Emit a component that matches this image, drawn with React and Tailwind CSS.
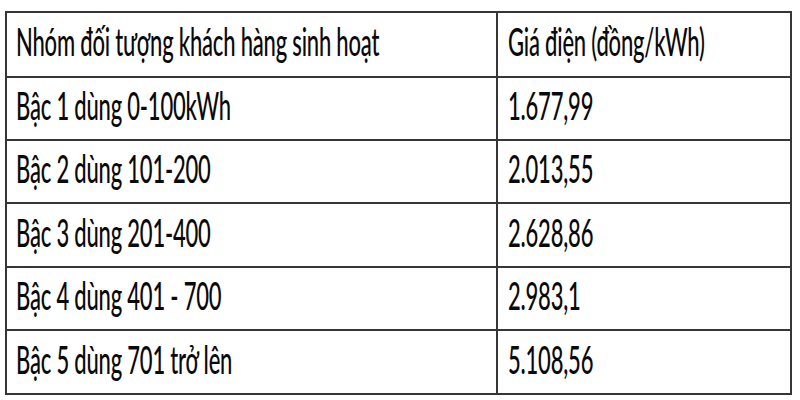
import React from "react";

const rows = [
  { label: "Bậc 1 dùng 0-100kWh", price: "1.677,99", h: "h-[63px]" },
  { label: "Bậc 2 dùng 101-200", price: "2.013,55", h: "h-[63px]" },
  { label: "Bậc 3 dùng 201-400", price: "2.628,86", h: "h-[64px]" },
  { label: "Bậc 4 dùng 401 - 700", price: "2.983,1", h: "h-[63px]" },
  { label: "Bậc 5 dùng 701 trở lên", price: "5.108,56", h: "h-[64px]" },
];

const Cell = ({ children, className = "" }) => (
  <div className={`flex items-center ${className}`}>
    <span className="inline-block scale-y-[1.75] origin-center text-[22px] leading-none font-medium text-[#0a0a0a] tracking-[-0.2px]">
      {children}
    </span>
  </div>
);

export default function App() {
  return (
    <div
      className="w-[800px] h-[400px] bg-white pt-[11px] pl-[5px]"
      style={{ fontFamily: "Lato, 'Noto Sans', sans-serif" }}
    >
      <div className="w-[787px] border-2 border-[#363636]">
        <div className="flex h-[63px]">
          <Cell className="w-[491px] border-r-2 border-[#363636] pl-[9px] pb-[5px]">
            Nhóm đối tượng khách hàng sinh hoạt
          </Cell>
          <Cell className="flex-1 pl-[10px] pb-[5px]">Giá điện (đồng/kWh)</Cell>
        </div>
        {rows.map((r) => (
          <div key={r.label} className={`flex border-t-2 border-[#363636] ${r.h}`}>
            <Cell className="w-[491px] border-r-2 border-[#363636] pl-[9px] pb-[5px]">
              {r.label}
            </Cell>
            <Cell className="flex-1 pl-[10px] pb-[5px]">{r.price}</Cell>
          </div>
        ))}
      </div>
    </div>
  );
}
